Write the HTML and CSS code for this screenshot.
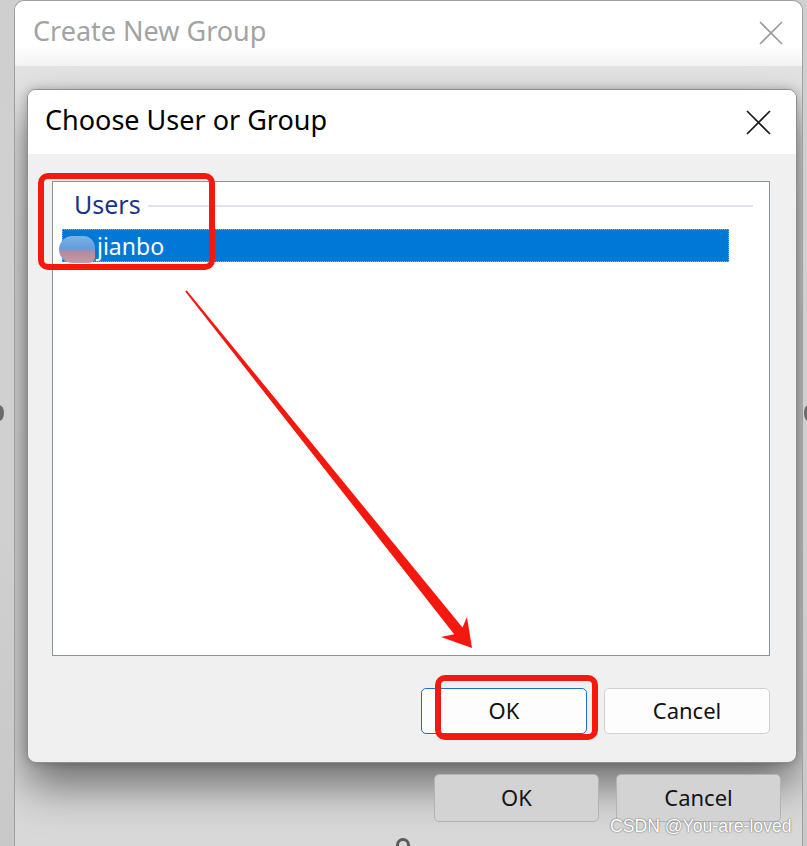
FILE: index.html
```html
<!DOCTYPE html>
<html>
<head>
<meta charset="utf-8">
<link rel="stylesheet" href="styles.css">
</head>
<body>
<div class="desk">
  <div class="outer">
    <div class="outer-title">
      <span class="outer-title-text">Create New Group</span>
      <svg class="x-icon outer-x" width="24" height="24" viewBox="0 0 24 24"><path d="M1 1L23 23M23 1L1 23" stroke="#9a9a9a" stroke-width="1.6" fill="none"/></svg>
    </div>
    <div class="outer-body">
      <div class="dialog">
        <div class="dlg-title">
          <span class="dlg-title-text">Choose User or Group</span>
          <svg class="x-icon inner-x" width="25" height="25" viewBox="0 0 25 25"><path d="M1 1L24 24M24 1L1 24" stroke="#1a1a1a" stroke-width="1.7" fill="none"/></svg>
        </div>
        <div class="dlg-body">
          <div class="listbox">
            <div class="group-header"><span class="group-name">Users</span><div class="group-rule"></div></div>
            <div class="row selected"><span class="blob"></span><span class="row-text">jianbo</span></div>
          </div>
          <div class="btns">
            <div class="btn btn-default">OK</div>
            <div class="btn">Cancel</div>
          </div>
        </div>
      </div>
      <div class="outer-btns">
        <div class="obtn">OK</div>
        <div class="obtn">Cancel</div>
      </div>
    </div>
  </div>

  <span class="knob knob-left"></span>
  <span class="knob knob-right"></span>
  <span class="knob knob-bottom"></span>

  <svg class="annot" width="807" height="846" viewBox="0 0 807 846">
    <rect x="41" y="176" width="171" height="91" rx="7" fill="none" stroke="#f5180f" stroke-width="6"/>
    <rect x="438" y="678" width="157" height="59" rx="7" fill="none" stroke="#f5180f" stroke-width="6"/>
    <polygon points="186.8,290.4 462.5,627.5 467,617 472,648 441,637 454.2,634.2 185.2,291.6" fill="#f5180f"/>
  </svg>

  <div class="watermark">CSDN @You-are-loved</div>
</div>
</body>
</html>
```
FILE: styles.css
```css
html, body {
  margin: 0;
  padding: 0;
}
body {
  width: 807px;
  height: 846px;
  overflow: hidden;
  font-family: "Noto Sans", "Liberation Sans", sans-serif;
}
.desk {
  position: relative;
  width: 807px;
  height: 846px;
  background: linear-gradient(to bottom, #cfcfcf, #d0d0d0 60%, #c8c8c8);
  overflow: hidden;
}
.outer {
  margin-left: 14px;
  width: 789px;
  height: 880px;
  border: 1px solid #9f9f9f;
  border-bottom: none;
  border-radius: 10px 10px 0 0;
  display: flex;
  flex-direction: column;
  overflow: hidden;
  box-sizing: border-box;
}
.outer-title {
  height: 65px;
  flex: none;
  background: linear-gradient(to bottom, #ffffff 0%, #ffffff 70%, #f3f3f3 100%);
  display: flex;
  align-items: center;
  padding-left: 18px;
  padding-right: 19px;
}
.outer-title-text {
  color: #a3a3a3;
  font-size: 27px;
  flex: 1;
  padding-bottom: 6px;
}
.outer-x { display: block; margin-bottom: 2px; }
.outer-body {
  flex: 1;
  background: linear-gradient(to bottom, #e4e4e4, #dadada 30%, #d8d8d8);
  padding: 23px 5px 0 12px;
}
.dialog {
  width: 770px;
  height: 674px;
  box-sizing: border-box;
  border: 1px solid #8e8e8e;
  border-radius: 9px;
  overflow: hidden;
  display: flex;
  flex-direction: column;
  box-shadow: 0 22px 44px rgba(0,0,0,0.5), 0 0 10px rgba(0,0,0,0.22);
  background: #f0f0f0;
}
.dlg-title {
  height: 64px;
  flex: none;
  background: #ffffff;
  display: flex;
  align-items: center;
  padding-left: 17px;
  padding-right: 25px;
}
.dlg-title-text {
  flex: 1;
  color: #000;
  font-size: 27px;
  padding-bottom: 6px;
}
.dlg-body {
  flex: 1;
  padding: 27px 26px 0 24px;
  display: flex;
  flex-direction: column;
}
.listbox {
  height: 475px;
  box-sizing: border-box;
  border: 1px solid #8d939b;
  background: #ffffff;
  padding: 6px 0 0 0;
}
.group-header {
  display: flex;
  align-items: center;
  padding-left: 21px;
  height: 32px;
}
.group-name {
  color: #1b3489;
  font-size: 25px;
  line-height: 32px;
}
.group-rule {
  flex: none;
  width: 605px;
  margin-left: 7px;
  height: 2px;
  background: #dbe3f1;
  margin-top: 4px;
}
.row {
  margin-top: 9px;
  margin-left: 9px;
  width: 667px;
  height: 33px;
  box-sizing: border-box;
  display: flex;
  align-items: center;
}
.selected {
  background: #0078d7;
  border: 1px dotted #e39a52;
  color: #ffffff;
}
.blob {
  width: 36px;
  height: 27px;
  margin-left: -4px;
  margin-top: 8px;
  border-radius: 14px 12px 6px 14px;
  background: linear-gradient(to bottom, #7fb2e4 0%, #5f9ee0 45%, #b48a9c 60%, #c49aa8 100%);
  flex: none;
}
.row-text {
  font-size: 23px;
  margin-left: 2px;
  line-height: 30px;
}
.btns {
  display: flex;
  justify-content: flex-end;
  gap: 17px;
  margin-top: 32px;
}
.btn {
  width: 166px;
  height: 46px;
  box-sizing: border-box;
  border: 1px solid #d0d0d0;
  border-radius: 5px;
  background: #fdfdfd;
  display: flex;
  align-items: center;
  justify-content: center;
  font-size: 22px;
  color: #111;
  padding-bottom: 2px;
}
.btn-default {
  border: 1px solid #1d6fc9;
  box-shadow: inset 0 0 0 1px #ffffff;
}
.outer-btns {
  display: flex;
  justify-content: flex-end;
  gap: 17px;
  margin-top: 11px;
  padding-right: 16px;
}
.obtn {
  width: 165px;
  height: 48px;
  box-sizing: border-box;
  border: 1px solid #b3b3b3;
  border-radius: 5px;
  background: #d3d3d3;
  display: flex;
  align-items: center;
  justify-content: center;
  font-size: 22px;
  color: #151515;
  padding-bottom: 2px;
}
.knob {
  position: absolute;
  background: #6a6a6a;
  border-radius: 50%;
}
.knob-left { left: -6px; top: 405px; width: 10px; height: 16px; }
.knob-right { right: -6px; top: 405px; width: 9px; height: 16px; }
.knob-bottom {
  left: 396px; top: 838px; width: 14px; height: 14px;
  background: transparent;
  border: 3px solid #5a5a5a;
  box-sizing: border-box;
}
.annot {
  position: absolute;
  left: 0;
  top: 0;
  pointer-events: none;
}
.watermark {
  position: absolute;
  left: 610px;
  top: 816px;
  font-family: "Liberation Sans", Arial, sans-serif;
  font-size: 17.6px;
  color: #ffffff;
  text-shadow: 0 0 1px #666, 0 0 2px #888;
  white-space: nowrap;
}
```
